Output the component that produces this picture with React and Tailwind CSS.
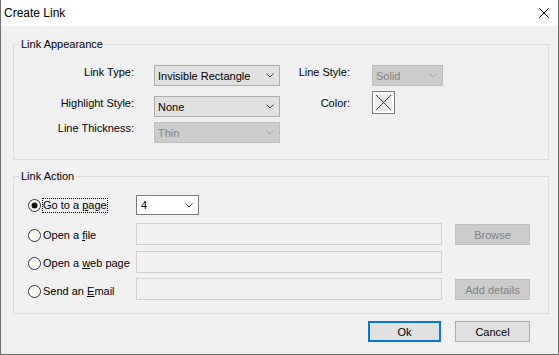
import React from "react";

function Chevron({ color }) {
  return (
    <svg width="8" height="5" viewBox="0 0 8 5" className="shrink-0">
      <polyline points="0.5,0.5 4,4 7.5,0.5" fill="none" stroke={color} strokeWidth="1" />
    </svg>
  );
}

function Select({ kind, className, children }) {
  const base = "flex items-center justify-between pl-[3px] pr-[5px] ";
  const skin =
    kind === "disabled"
      ? "bg-[#cccccc] border border-[#bfbfbf] text-[#838383] "
      : kind === "white"
      ? "bg-white border border-[#7a7a7a] text-black "
      : "bg-[#e1e1e1] border border-[#adadad] text-black ";
  return (
    <div className={base + skin + className}>
      <span>{children}</span>
      <Chevron color={kind === "disabled" ? "#a6a6a6" : "#3c3c3c"} />
    </div>
  );
}

function Radio({ checked, focused, children }) {
  return (
    <div className="flex items-center">
      <svg width="13" height="13" viewBox="0 0 13 13" className="shrink-0">
        <circle cx="6.5" cy="6.5" r="6" fill="#ffffff" stroke="#333333" strokeWidth="1" />
        {checked && <circle cx="6.5" cy="6.5" r="3" fill="#111111" />}
      </svg>
      <span
        className={
          focused
            ? "ml-[1px] border border-dotted border-black leading-[13px] whitespace-nowrap"
            : "ml-[1px] border border-transparent leading-[13px] whitespace-nowrap"
        }
      >
        {children}
      </span>
    </div>
  );
}

function Btn({ kind, className, children }) {
  const skin =
    kind === "disabled"
      ? "bg-[#cccccc] border border-[#bfbfbf] text-[#838383] "
      : kind === "default"
      ? "bg-[#e1e1e1] border-2 border-[#0078d7] text-black "
      : "bg-[#e1e1e1] border border-[#adadad] text-black ";
  return <div className={"flex items-center justify-center " + skin + className}>{children}</div>;
}

function TextBox({ className }) {
  return <div className={"bg-[#f0f0f0] border border-[#cfcfcf] " + className} />;
}

export default function App() {
  return (
    <div className="w-[559px] h-[355px] flex flex-col bg-[#f0f0f0] border-x border-b border-[#6f6f6f] font-['Liberation_Sans',Arial,sans-serif] text-[11px] leading-[16px] text-black overflow-hidden">
      {/* Title bar */}
      <div className="h-[26px] shrink-0 bg-white flex items-center justify-between pl-[3px] pr-[9px]">
        <span className="text-[12px]">Create Link</span>
        <svg width="10" height="10" viewBox="0 0 10 10">
          <path d="M0.5 0.5 L9.5 9.5 M9.5 0.5 L0.5 9.5" stroke="#000000" strokeWidth="1" />
        </svg>
      </div>

      {/* Body */}
      <div className="pl-[12px] flex flex-col">
        {/* Link Appearance */}
        <fieldset className="mt-[10px] w-[536px] border border-[#dcdcdc]">
          <legend className="ml-[5px] px-[2px] leading-[16px]">Link Appearance</legend>
          <div className="pt-[12px] pb-[16px] flex flex-col">
            <div className="flex items-start h-[22px]">
              <div className="w-[120px] text-right">Link Type:</div>
              <Select className="ml-[20px] mt-[1px] w-[126px] h-[21px]">Invisible Rectangle</Select>
              <div className="w-[70px] text-right">Line Style:</div>
              <Select kind="disabled" className="ml-[22px] mt-[1px] w-[71px] h-[21px]">
                Solid
              </Select>
            </div>
            <div className="mt-[5px] flex items-start h-[26px]">
              <div className="w-[120px] mt-[4px] text-right">Highlight Style:</div>
              <Select className="ml-[20px] mt-[5px] w-[126px] h-[21px]">None</Select>
              <div className="w-[70px] mt-[4px] text-right">Color:</div>
              <div className="ml-[22px] w-[23px] h-[23px] border border-[#7a7a7a] bg-white p-[2px]">
                <div className="w-full h-full bg-[#ebebeb] flex items-center justify-center">
                  <svg width="17" height="17" viewBox="0 0 17 17" shapeRendering="crispEdges">
                    <path d="M1 1 L16 16 M16 1 L1 16" stroke="#ff0000" strokeWidth="1" fill="none" />
                  </svg>
                </div>
              </div>
            </div>
            <div className="mt-[3px] flex items-start h-[23px]">
              <div className="w-[120px] text-right">Line Thickness:</div>
              <Select kind="disabled" className="ml-[20px] mt-[2px] w-[126px] h-[21px]">
                Thin
              </Select>
            </div>
          </div>
        </fieldset>

        {/* Link Action */}
        <fieldset className="mt-[8px] w-[536px] border border-[#dcdcdc]">
          <legend className="ml-[5px] px-[2px] leading-[16px]">Link Action</legend>
          <div className="pt-[11px] pb-[13px] flex flex-col">
            <div className="flex items-start h-[20px]">
              <div className="ml-[14px] w-[108px] mt-[3px]">
                <Radio checked focused>
                  Go to a <span className="underline underline-offset-[1px]">p</span>age
                </Radio>
              </div>
              <Select kind="white" className="w-[63px] h-[20px] pl-[4px]">
                4
              </Select>
            </div>
            <div className="mt-[8px] flex items-start h-[22px]">
              <div className="ml-[14px] w-[108px] mt-[5px]">
                <Radio>
                  Open a <span className="underline underline-offset-[1px]">f</span>ile
                </Radio>
              </div>
              <TextBox className="w-[306px] h-[22px]" />
              <Btn kind="disabled" className="ml-[13px] mt-[1px] w-[75px] h-[21px]">
                Browse
              </Btn>
            </div>
            <div className="mt-[6px] flex items-start h-[22px]">
              <div className="ml-[14px] w-[108px] mt-[5px]">
                <Radio>
                  Open a <span className="underline underline-offset-[1px]">w</span>eb page
                </Radio>
              </div>
              <TextBox className="w-[306px] h-[22px]" />
            </div>
            <div className="mt-[5px] flex items-start h-[22px]">
              <div className="ml-[14px] w-[108px] mt-[6px]">
                <Radio>
                  Send an <span className="underline underline-offset-[1px]">E</span>mail
                </Radio>
              </div>
              <TextBox className="w-[306px] h-[22px]" />
              <Btn kind="disabled" className="ml-[13px] mt-[1px] w-[75px] h-[21px]">
                Add details
              </Btn>
            </div>
          </div>
        </fieldset>

        {/* Buttons */}
        <div className="mt-[7px] w-[536px] pr-[19px] flex justify-end gap-[14px]">
          <Btn kind="default" className="w-[73px] h-[21px]">
            Ok
          </Btn>
          <Btn className="w-[75px] h-[21px]">Cancel</Btn>
        </div>
      </div>
    </div>
  );
}
